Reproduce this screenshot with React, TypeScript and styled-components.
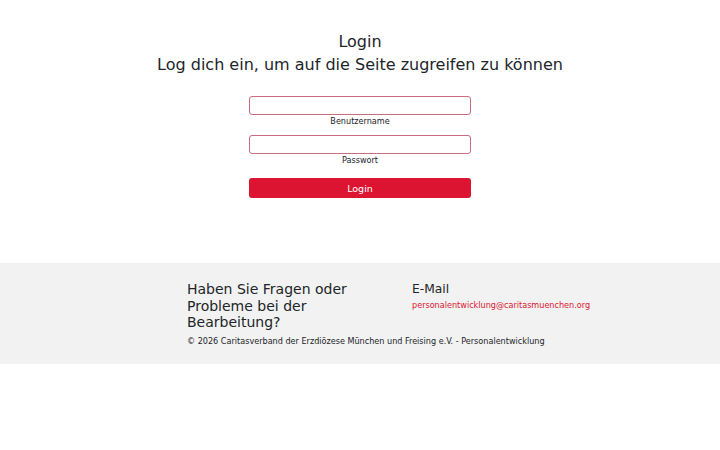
import React from "react";
import styled, { createGlobalStyle } from "styled-components";

const Global = createGlobalStyle`
  html, body { margin: 0; padding: 0; background: #fff; }
  body { font-family: "DejaVu Sans", sans-serif; color: #212529; }
`;

const Main = styled.main`
  display: flex;
  flex-direction: column;
  align-items: center;
  padding-top: 30px;
  height: 263px;
  box-sizing: border-box;
`;

const Title = styled.h1`
  margin: 0;
  font-weight: 400;
  font-size: 16px;
  line-height: 23px;
  text-align: center;
`;

const Form = styled.form`
  display: flex;
  flex-direction: column;
  width: 222px;
  margin-top: 20px;
`;

const Field = styled.div`
  display: flex;
  flex-direction: column;
  align-items: center;
  margin-bottom: 8px;
`;

const Input = styled.input`
  box-sizing: border-box;
  width: 100%;
  height: 19px;
  border: 1px solid #c76e7e;
  border-radius: 3px;
  padding: 0 6px;
  font-size: 8px;
  outline: none;
`;

const Small = `
  font-family: "DejaVu Sans Condensed", "DejaVu Sans", sans-serif;
  font-size: 9px;
`;

const Label = styled.label`
  ${Small}
  line-height: 11px;
  margin-top: 1px;
  color: #212529;
`;

const Button = styled.button`
  width: 100%;
  height: 20px;
  margin-top: 4px;
  border: none;
  border-radius: 3px;
  background: #dc1431;
  color: #fff;
  font-family: "DejaVu Sans", sans-serif;
  font-size: 9.5px;
`;

const Footer = styled.footer`
  background: #f2f2f2;
  height: 101px;
  box-sizing: border-box;
  padding: 18px 0 0 187px;
`;

const Columns = styled.div`
  display: grid;
  grid-template-columns: 225px auto;
`;

const Question = styled.h2`
  margin: 0;
  font-weight: 400;
  font-size: 14px;
  line-height: 16.6px;
  width: 200px;
`;

const MailTitle = styled.h3`
  margin: 0;
  font-weight: 400;
  font-size: 12.3px;
  line-height: 16px;
`;

const MailLink = styled.a`
  ${Small}
  display: block;
  margin-top: 3px;
  color: #dc1431;
  text-decoration: none;
`;

const Copy = styled.p`
  ${Small}
  margin: 5px 0 0;
  line-height: 11px;
`;

export default function App() {
  return (
    <>
      <Global />
      <Main>
        <Title>Login</Title>
        <Title>Log dich ein, um auf die Seite zugreifen zu können</Title>
        <Form onSubmit={(e) => e.preventDefault()}>
          <Field>
            <Input id="u" type="text" />
            <Label htmlFor="u">Benutzername</Label>
          </Field>
          <Field>
            <Input id="p" type="password" />
            <Label htmlFor="p">Passwort</Label>
          </Field>
          <Button type="submit">Login</Button>
        </Form>
      </Main>
      <Footer>
        <Columns>
          <Question>Haben Sie Fragen oder Probleme bei der Bearbeitung?</Question>
          <div>
            <MailTitle>E-Mail</MailTitle>
            <MailLink href="#">personalentwicklung@caritasmuenchen.org</MailLink>
          </div>
        </Columns>
        <Copy>© 2026 Caritasverband der Erzdiözese München und Freising e.V. - Personalentwicklung</Copy>
      </Footer>
    </>
  );
}
